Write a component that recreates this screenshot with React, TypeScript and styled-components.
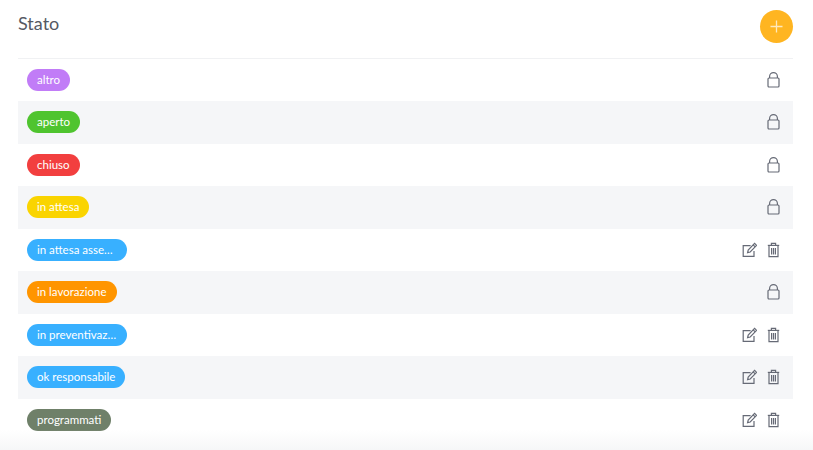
import React from "react";
import styled, { createGlobalStyle } from "styled-components";

const GlobalStyle = createGlobalStyle`
  html, body {
    margin: 0;
    padding: 0;
    height: 100%;
    overflow: hidden;
    background: #fff;
    font-family: Lato, "Noto Sans", sans-serif;
  }
`;

const Page = styled.div`
  position: relative;
  width: 813px;
  height: 450px;
  padding: 0 20px 0 18px;
  box-sizing: border-box;
  overflow: hidden;
`;

const Header = styled.div`
  display: flex;
  justify-content: space-between;
  height: 58.5px;
  padding-top: 10px;
  box-sizing: border-box;
  border-bottom: 1px solid #f0f1f3;
`;

const Title = styled.h2`
  margin: 2px 0 0;
  font-size: 18px;
  line-height: 22px;
  font-weight: 400;
  color: #555963;
`;

const AddButton = styled.button`
  display: flex;
  align-items: center;
  justify-content: center;
  width: 33px;
  height: 33px;
  padding: 0;
  border: none;
  border-radius: 50%;
  background: #ffb521;
  cursor: pointer;
`;

const List = styled.div`
  display: flex;
  flex-direction: column;
`;

const Row = styled.div`
  display: flex;
  align-items: center;
  justify-content: space-between;
  height: 42.5px;
  padding: 0 12px 0 9px;
  box-sizing: border-box;

  &:nth-child(even) {
    background: #f5f6f8;
  }
`;

const Badge = styled.span<{ $color: string }>`
  display: inline-block;
  box-sizing: border-box;
  max-width: 100px;
  height: 22px;
  padding: 0 10px;
  border-radius: 11px;
  background: ${(props) => props.$color};
  color: #fff;
  font-size: 11.5px;
  line-height: 22px;
  white-space: nowrap;
  overflow: hidden;
  text-overflow: ellipsis;
`;

const Actions = styled.div`
  display: flex;
  align-items: center;
  gap: 9px;
  color: #666a76;
`;

const IconSvg = styled.svg`
  display: block;
  width: 15px;
  height: 16px;
  fill: none;
  stroke: currentColor;
  stroke-width: 1.2;
`;

const BottomFade = styled.div`
  position: absolute;
  left: 0;
  right: 0;
  bottom: 0;
  height: 20px;
  background: linear-gradient(to bottom, rgba(245, 246, 248, 0), #f6f7f8);
  pointer-events: none;
`;

const LockIcon = () => (
  <IconSvg viewBox="0 0 15 16">
    <path d="M3.6 6V4.4a3.9 3.8 0 0 1 7.8 0V6" />
    <rect x="2" y="6" width="11" height="9" rx="1" />
  </IconSvg>
);

const EditIcon = () => (
  <IconSvg viewBox="0 0 15 16">
    <path d="M12 9v5.4H1.2V3.6h7.4" />
    <path d="M5.6 10.6l.6-2.6 6.4-6.6 2 2-6.4 6.6z" />
    <path d="M11.2 2.8l2 2" />
  </IconSvg>
);

const TrashIcon = () => (
  <IconSvg viewBox="0 0 15 16">
    <path d="M1.8 3.4h11.4" />
    <path d="M5.4 3.2V1.4h4.2v1.8" />
    <path d="M3 3.4v11.2h9V3.4" />
    <path d="M5.6 6v6.4M7.5 6v6.4M9.4 6v6.4" />
  </IconSvg>
);

const statuses = [
  { name: "altro", color: "#c17cf7", locked: true },
  { name: "aperto", color: "#4fc42f", locked: true },
  { name: "chiuso", color: "#f23f3f", locked: true },
  { name: "in attesa", color: "#fad400", locked: true },
  { name: "in attesa assegnazione", color: "#38b0ff" },
  { name: "in lavorazione", color: "#ff9500", locked: true },
  { name: "in preventivazione", color: "#38b0ff" },
  { name: "ok responsabile", color: "#38b0ff" },
  { name: "programmati", color: "#6f8069" },
];

const App = () => {
  return (
    <Page>
      <GlobalStyle />
      <Header>
        <Title>Stato</Title>
        <AddButton type="button" aria-label="Aggiungi">
          <svg width="13" height="13" viewBox="0 0 13 13" stroke="#ffe9bd" strokeWidth="1.3">
            <path d="M6.5 0.5v12M0.5 6.5h12" />
          </svg>
        </AddButton>
      </Header>
      <List>
        {statuses.map((status) => (
          <Row key={status.name}>
            <Badge $color={status.color}>{status.name}</Badge>
            <Actions>
              {status.locked ? (
                <LockIcon />
              ) : (
                <>
                  <EditIcon />
                  <TrashIcon />
                </>
              )}
            </Actions>
          </Row>
        ))}
      </List>
      <BottomFade />
    </Page>
  );
};

export default App;
